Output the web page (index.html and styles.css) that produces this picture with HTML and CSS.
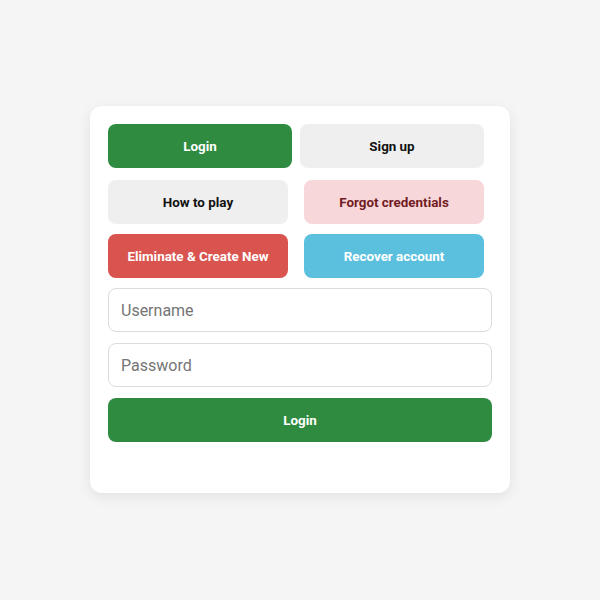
FILE: index.html
```html
<!DOCTYPE html>
<html lang="en">
<head>
    <meta charset="UTF-8">
    <meta name="viewport" content="width=device-width, initial-scale=1.0">
    <title>Login</title>
    <link rel="stylesheet" href="styles.css">
</head>
<body>
    <div class="card">
        <div class="row row-tabs">
            <button class="btn btn-green">Login</button>
            <button class="btn btn-gray">Sign up</button>
        </div>
        <div class="row row-wide">
            <button class="btn btn-gray">How to play</button>
            <button class="btn btn-pink">Forgot credentials</button>
        </div>
        <div class="row row-wide">
            <button class="btn btn-red">Eliminate &amp; Create New</button>
            <button class="btn btn-blue">Recover account</button>
        </div>
        <input class="field" type="text" placeholder="Username">
        <input class="field" type="password" placeholder="Password">
        <button class="btn btn-green btn-full">Login</button>
    </div>
</body>
</html>
```

FILE: styles.css
```css
html, body {
    height: 100%;
}
body {
    font-family: Roboto, "Liberation Sans", sans-serif;
    margin: 0;
    background-color: #f5f5f5;
    display: flex;
    align-items: flex-start;
    justify-content: center;
}
.card {
    width: 420px;
    margin-top: 106px;
    box-sizing: border-box;
    padding: 18px 18px 51px;
    background-color: #fff;
    border-radius: 12px;
    box-shadow: 0 4px 14px rgba(0, 0, 0, 0.08);
    display: flex;
    flex-direction: column;
}
.row {
    display: grid;
    width: 376px;
}
.row-tabs {
    grid-template-columns: 184px 184px;
    column-gap: 8px;
    margin-bottom: 12px;
}
.row-wide {
    grid-template-columns: 180px 180px;
    column-gap: 16px;
    margin-bottom: 10px;
}
.btn {
    height: 44px;
    border: none;
    border-radius: 8px;
    font-family: Roboto, "Liberation Sans", sans-serif;
    font-size: 13.4px;
    font-weight: 700;
    cursor: pointer;
    padding: 0;
}
.btn-green {
    background-color: #2e8b3f;
    color: #fff;
}
.btn-gray {
    background-color: #efefef;
    color: #111;
}
.btn-pink {
    background-color: #f8d7da;
    color: #721c24;
}
.btn-red {
    background-color: #d9534f;
    color: #fff;
}
.btn-blue {
    background-color: #5bc0de;
    color: #fff;
}
.btn-full {
    width: 100%;
}
.field {
    height: 44px;
    box-sizing: border-box;
    border: 1px solid #dcdcdc;
    border-radius: 8px;
    padding: 0 12px;
    font-family: Roboto, "Liberation Sans", sans-serif;
    font-size: 16px;
    color: #333;
    margin-bottom: 11px;
    outline: none;
}
.field::placeholder {
    color: #757575;
}
```
